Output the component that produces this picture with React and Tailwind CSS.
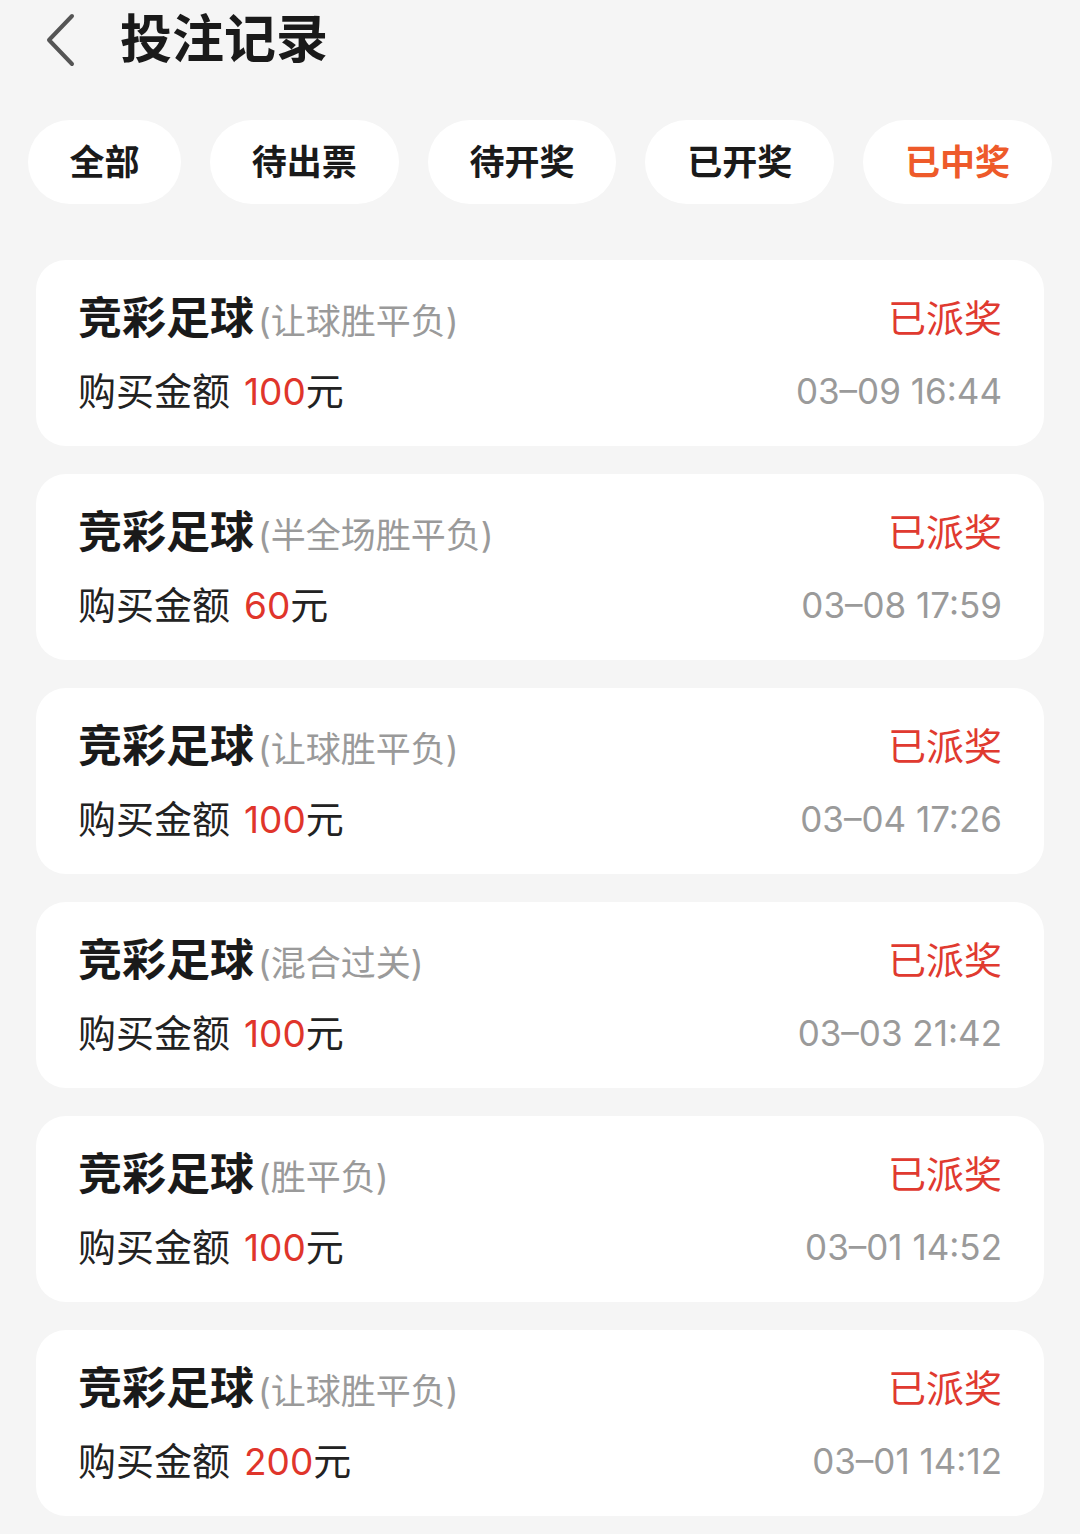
import React from 'react';

const tabs = ['全部', '待出票', '待开奖', '已开奖', '已中奖'];

const records = [
  { type: '让球胜平负', amount: '100', time: '03–09 16:44' },
  { type: '半全场胜平负', amount: '60', time: '03–08 17:59' },
  { type: '让球胜平负', amount: '100', time: '03–04 17:26' },
  { type: '混合过关', amount: '100', time: '03–03 21:42' },
  { type: '胜平负', amount: '100', time: '03–01 14:52' },
  { type: '让球胜平负', amount: '200', time: '03–01 14:12' },
];

const font = { fontFamily: 'Inter, "Noto Sans CJK SC", sans-serif' };

function BackIcon() {
  return (
    <svg width="32" height="54" viewBox="0 0 32 54" fill="none">
      <path d="M28 3 L5 27 L28 51" stroke="#555" strokeWidth="4" strokeLinecap="round" strokeLinejoin="round" />
    </svg>
  );
}

function RecordCard({ r }) {
  return (
    <div className="bg-white rounded-[30px] h-[186px] px-[42px] pt-[36px]">
      <div className="flex items-center justify-between h-[44px]">
        <div className="flex items-baseline">
          <span className="text-[44px] font-bold text-[#1a1a1a] leading-none">竞彩足球</span>
          <span className="text-[35px] text-[#9a9a9a] leading-none ml-[4px]">({r.type})</span>
        </div>
        <span className="text-[38px] text-[#e03a30] leading-none">已派奖</span>
      </div>
      <div className="flex items-center justify-between h-[44px] mt-[29px]">
        <div className="flex items-baseline text-[38px] leading-none text-[#222]">
          <span>购买金额</span>
          <span className="ml-[14px] text-[#e0352b] text-[37px]">{r.amount}</span>
          <span>元</span>
        </div>
        <span className="text-[35px] text-[#9a9a9a] leading-none">{r.time}</span>
      </div>
    </div>
  );
}

export default function App() {
  return (
    <div className="w-[1080px] min-h-[1534px] bg-[#f5f5f5]" style={font}>
      <div className="flex items-center h-[80px] pl-[44px]">
        <BackIcon />
        <h1 className="ml-[44px] text-[52px] font-bold text-[#1a1a1a] leading-none">投注记录</h1>
      </div>

      <div className="flex gap-[29px] px-[28px] mt-[40px]">
        {tabs.map((t, i) => (
          <div
            key={t}
            className={`h-[84px] rounded-full bg-white flex items-center justify-center text-[35px] font-bold ${
              i === 0 ? 'w-[153px]' : 'w-[189px]'
            } ${i === 4 ? 'text-[#ee5a2a]' : 'text-[#1a1a1a]'}`}
          >
            {t}
          </div>
        ))}
      </div>

      <div className="flex flex-col gap-[28px] px-[36px] mt-[56px] pb-[18px]">
        {records.map((r, i) => (
          <RecordCard key={i} r={r} />
        ))}
      </div>
    </div>
  );
}
